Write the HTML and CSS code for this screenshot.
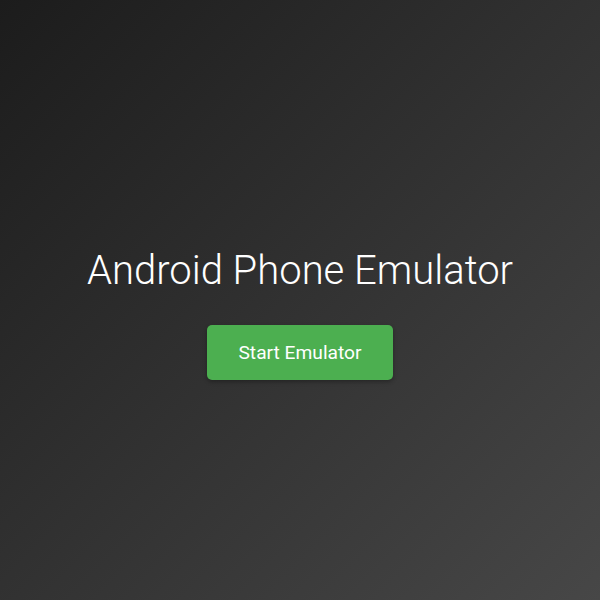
FILE: index.html
```html
<!DOCTYPE html>
<html>
<head>
<meta charset="utf-8">
<link rel="stylesheet" href="styles.css">
</head>
<body>
<main class="screen">
  <h1 class="title">Android Phone Emulator</h1>
  <button class="start-btn">Start Emulator</button>
</main>
</body>
</html>
```

FILE: styles.css
```css
html, body {
  margin: 0;
  padding: 0;
  height: 100%;
}
body {
  background: linear-gradient(135deg, #1c1c1c 0%, #474747 100%);
  font-family: Roboto, "Noto Sans", sans-serif;
  color: #fff;
}
.screen {
  box-sizing: border-box;
  height: 600px;
  padding-top: 26px;
  display: flex;
  flex-direction: column;
  align-items: center;
  justify-content: center;
}
.title {
  margin: 0 0 30px;
  font-size: 40px;
  font-weight: 300;
  line-height: 48px;
}
.start-btn {
  font-family: Roboto, "Noto Sans", sans-serif;
  font-size: 19.2px;
  color: #fff;
  background: #4caf50;
  border: none;
  border-radius: 5px;
  padding: 16px 31px;
  line-height: 23px;
  box-shadow: 0 2px 4px rgba(0,0,0,0.3);
}
```
